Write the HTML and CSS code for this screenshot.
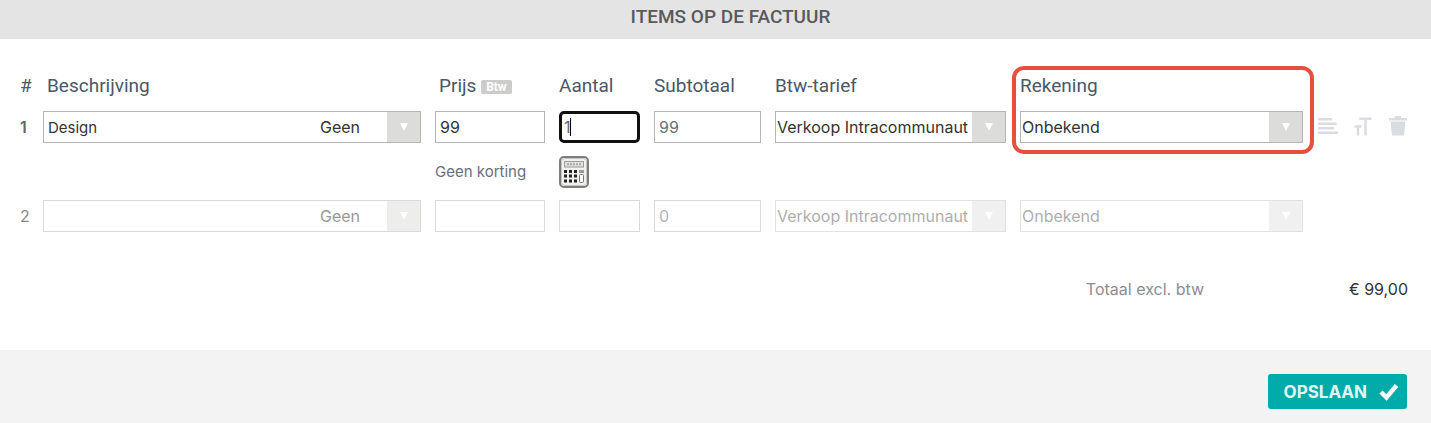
FILE: index.html
```html
<!DOCTYPE html>
<html lang="nl">
<head>
    <meta charset="UTF-8">
    <meta name="viewport" content="width=device-width, initial-scale=1.0">
    <title>Items op de factuur</title>
    <link rel="stylesheet" href="styles.css">
</head>
<body>
    <form class="invoice">
        <h2 class="title">ITEMS OP DE FACTUUR</h2>

        <div class="items">
            <table class="items-table">
                <colgroup>
                    <col class="col-nr">
                    <col class="col-description">
                    <col class="col-price">
                    <col class="col-amount">
                    <col class="col-subtotal">
                    <col class="col-vat">
                    <col class="col-account">
                    <col class="col-actions">
                </colgroup>
                <thead>
                    <tr>
                        <th>#</th>
                        <th class="indent">Beschrijving</th>
                        <th class="indent">Prijs <span class="badge">Btw</span></th>
                        <th>Aantal</th>
                        <th>Subtotaal</th>
                        <th>Btw-tarief</th>
                        <th class="account">Rekening<span class="highlight"></span></th>
                        <td></td>
                    </tr>
                </thead>
                <tbody>
                    <tr>
                        <td class="nr current">1</td>
                        <td>
                            <div class="field description">
                                <input type="text" value="Design" aria-label="Beschrijving 1">
                                <div class="select unit">
                                    <select aria-label="Eenheid 1"><option>Geen</option></select>
                                </div>
                            </div>
                        </td>
                        <td><input class="field" type="text" value="99" aria-label="Prijs 1"></td>
                        <td class="amount">
                            <input class="field active" type="text" value="1" aria-label="Aantal 1">
                            <span class="caret"></span>
                        </td>
                        <td><input class="field muted" type="text" value="99" aria-label="Subtotaal 1" readonly></td>
                        <td>
                            <div class="field select">
                                <select aria-label="Btw-tarief 1"><option>Verkoop Intracommunaut</option></select>
                            </div>
                        </td>
                        <td>
                            <div class="field select">
                                <select aria-label="Rekening 1"><option>Onbekend</option></select>
                            </div>
                        </td>
                        <td>
                            <div class="actions">
                                <button type="button" aria-label="Tekstregel">
                                    <svg width="20" height="20" viewBox="0 0 20 20">
                                        <path d="M0 3.2h14M0 7.7h18.5M0 12.2h16M0 16.7h20" stroke="currentColor" stroke-width="2.6"/>
                                    </svg>
                                </button>
                                <button type="button" aria-label="Tekstgrootte">
                                    <svg width="20" height="20" viewBox="0 0 20 20">
                                        <path d="M6.500 2.800h12M12.500 2v17.500M1.500 10.500h7M5 10v9.500" fill="none" stroke="currentColor" stroke-width="2.400"/>
                                    </svg>
                                </button>
                                <button type="button" aria-label="Verwijderen">
                                    <svg width="20" height="20" viewBox="0 0 20 20">
                                        <path d="M1 2h5.500l1-2h5l1 2H19v2.600H1zM2.500 5.500h15L16 19.500H4z" fill="currentColor"/>
                                    </svg>
                                </button>
                            </div>
                        </td>
                    </tr>
                    <tr class="extra">
                        <td></td>
                        <td></td>
                        <td><a href="#" class="discount">Geen korting</a></td>
                        <td>
                            <button type="button" class="calculator" aria-label="Rekenmachine">
                                <svg width="30" height="32" viewBox="0 0 30 32">
                                    <rect x="1" y="1" width="28" height="30" rx="4" fill="#f1f1f0" stroke="#7d7d7a" stroke-width="2"/>
                                    <rect x="2.500" y="2.500" width="25" height="27" rx="3" fill="none" stroke="#c6c6c3"/>
                                    <rect x="5.500" y="5.500" width="19" height="5.500" fill="#e2e2e0" stroke="#9b9b98"/>
                                    <path d="M8 8.300h14" stroke="#aaa" stroke-width="2" stroke-dasharray="2 1"/>
                                    <path d="M5 15.500h13M5 20h13M5 25h13" stroke="#222" stroke-width="3" stroke-dasharray="3 2"/>
                                    <path d="M20 15.500h5" stroke="#999" stroke-width="3"/>
                                    <rect x="20.500" y="18.500" width="4" height="8" rx="1" fill="#fff" stroke="#777"/>
                                </svg>
                            </button>
                        </td>
                        <td colspan="4"></td>
                    </tr>
                    <tr class="next">
                        <td class="nr">2</td>
                        <td>
                            <div class="field description">
                                <input type="text" value="" aria-label="Beschrijving 2">
                                <div class="select unit">
                                    <select aria-label="Eenheid 2"><option>Geen</option></select>
                                </div>
                            </div>
                        </td>
                        <td><input class="field" type="text" value="" aria-label="Prijs 2"></td>
                        <td><input class="field" type="text" value="" aria-label="Aantal 2"></td>
                        <td><input class="field muted" type="text" value="0" aria-label="Subtotaal 2" readonly></td>
                        <td>
                            <div class="field select faded">
                                <select aria-label="Btw-tarief 2"><option>Verkoop Intracommunaut</option></select>
                            </div>
                        </td>
                        <td>
                            <div class="field select faded">
                                <select aria-label="Rekening 2"><option>Onbekend</option></select>
                            </div>
                        </td>
                        <td></td>
                    </tr>
                </tbody>
            </table>

            <div class="total">
                <span class="total-label">Totaal excl. btw</span>
                <span class="total-value">€ 99,00</span>
            </div>
        </div>

        <div class="footer">
            <button type="button" class="save">
                OPSLAAN
                <svg width="20" height="18" viewBox="0 0 20 18">
                    <path d="M2 9l5.500 5.500L17.500 2.500" fill="none" stroke="#fff" stroke-width="4.500"/>
                </svg>
            </button>
        </div>
    </form>
</body>
</html>
```
FILE: styles.css
```css
* {
    margin: 0;
    padding: 0;
    box-sizing: border-box;
}

body {
    font-family: "Inter", sans-serif;
    font-size: 16px;
    color: #333;
    background: #fff;
}

.title {
    height: 39px;
    padding-left: 30px;
    line-height: 34px;
    background: #e4e4e4;
    color: #5a5a5a;
    font-family: "Roboto", sans-serif;
    font-size: 19px;
    font-weight: 500;
    text-align: center;
}

.items {
    padding: 32px 20px 0;
}

.items-table {
    width: 100%;
    table-layout: fixed;
    border-collapse: collapse;
}

.col-nr { width: 23px; }
.col-price { width: 124px; }
.col-amount { width: 95px; }
.col-subtotal { width: 121px; }
.col-vat { width: 245px; }
.col-account { width: 297px; }
.col-actions { width: 94px; }

th {
    height: 40px;
    padding-bottom: 10px;
    color: #4a586a;
    font-family: "Roboto", sans-serif;
    font-size: 19px;
    font-weight: 400;
    line-height: 30px;
    text-align: left;
    white-space: nowrap;
}

th.indent {
    padding-left: 4px;
}

.account {
    position: relative;
}

/* red frame around the account column */
.highlight {
    position: absolute;
    top: -5px;
    left: -8px;
    right: 3px;
    height: 88px;
    border: 4px solid #e5503c;
    border-radius: 12px;
    pointer-events: none;
}

.badge {
    display: inline-block;
    padding: 0 5px;
    border-radius: 2px;
    background: #ccc;
    color: #fff;
    font-size: 12px;
    font-weight: 700;
    line-height: 14px;
    vertical-align: 1px;
}

td {
    vertical-align: top;
}

tbody td {
    padding-right: 14px;
}

tbody td:last-child {
    padding-right: 0;
}

.nr {
    color: #666;
    line-height: 32px;
}

.current {
    font-weight: 600;
}

.field {
    display: block;
    width: 100%;
    height: 32px;
    padding: 0 4px;
    border: 1px solid #b5b5b5;
    background: #fff;
    color: #333;
    font-family: inherit;
    font-size: 16px;
}

.muted {
    color: #66707c;
}

.active {
    border: 3px solid #111;
    border-radius: 5px;
    padding: 0 2px;
    color: #666;
}

.amount {
    position: relative;
}

.caret {
    position: absolute;
    top: 7px;
    left: 11px;
    width: 1px;
    height: 18px;
    background: #000;
}

.description {
    display: flex;
    padding: 0;
}

.description input {
    flex: 1;
    min-width: 0;
    padding-left: 4px;
    border: 0;
    background: none;
    color: inherit;
    font-family: inherit;
    font-size: 15px;
}

.select {
    position: relative;
    padding: 0;
}

.select select {
    display: block;
    width: 100%;
    height: 30px;
    padding: 0 33px 0 1px;
    border: 0;
    background: linear-gradient(#dcdcda, #dcdcda) right / 33px 100% no-repeat;
    color: inherit;
    font: inherit;
    appearance: none;
}

.select::after {
    content: "";
    position: absolute;
    top: 11px;
    right: 12px;
    border: 4px solid transparent;
    border-top: 8px solid #fff;
    border-bottom: 0;
    pointer-events: none;
}

.unit {
    width: 101px;
}

.actions {
    display: flex;
    justify-content: space-between;
    padding: 5px 3px 0 1px;
}

.actions button {
    height: 20px;
    border: 0;
    background: none;
    color: #d9dce2;
    cursor: pointer;
}

.extra td {
    height: 57px;
    padding-top: 13px;
}

.discount {
    color: #66707c;
    line-height: 32px;
    font-size: 15px;
    text-decoration: none;
    white-space: nowrap;
}

.calculator {
    display: block;
    border: 0;
    background: none;
    cursor: pointer;
}

.next .nr {
    color: #888;
}

.next .field {
    opacity: 0.5;
}

.next .faded {
    opacity: 0.4;
}

.total {
    display: flex;
    justify-content: flex-end;
    padding: 45px 3px 49px 0;
    line-height: 24px;
}

.total-label {
    color: #8c8c94;
}

.total-value {
    width: 204px;
    text-align: right;
}

.footer {
    display: flex;
    justify-content: flex-end;
    padding: 24px;
    background: #f3f3f3;
}

.save {
    display: flex;
    align-items: center;
    gap: 12px;
    height: 35px;
    padding: 0 8px 0 16px;
    border: 0;
    border-radius: 3px;
    background: #00aba9;
    color: #e2f6f5;
    font-family: inherit;
    font-size: 17px;
    font-weight: 700;
    cursor: pointer;
}
```
